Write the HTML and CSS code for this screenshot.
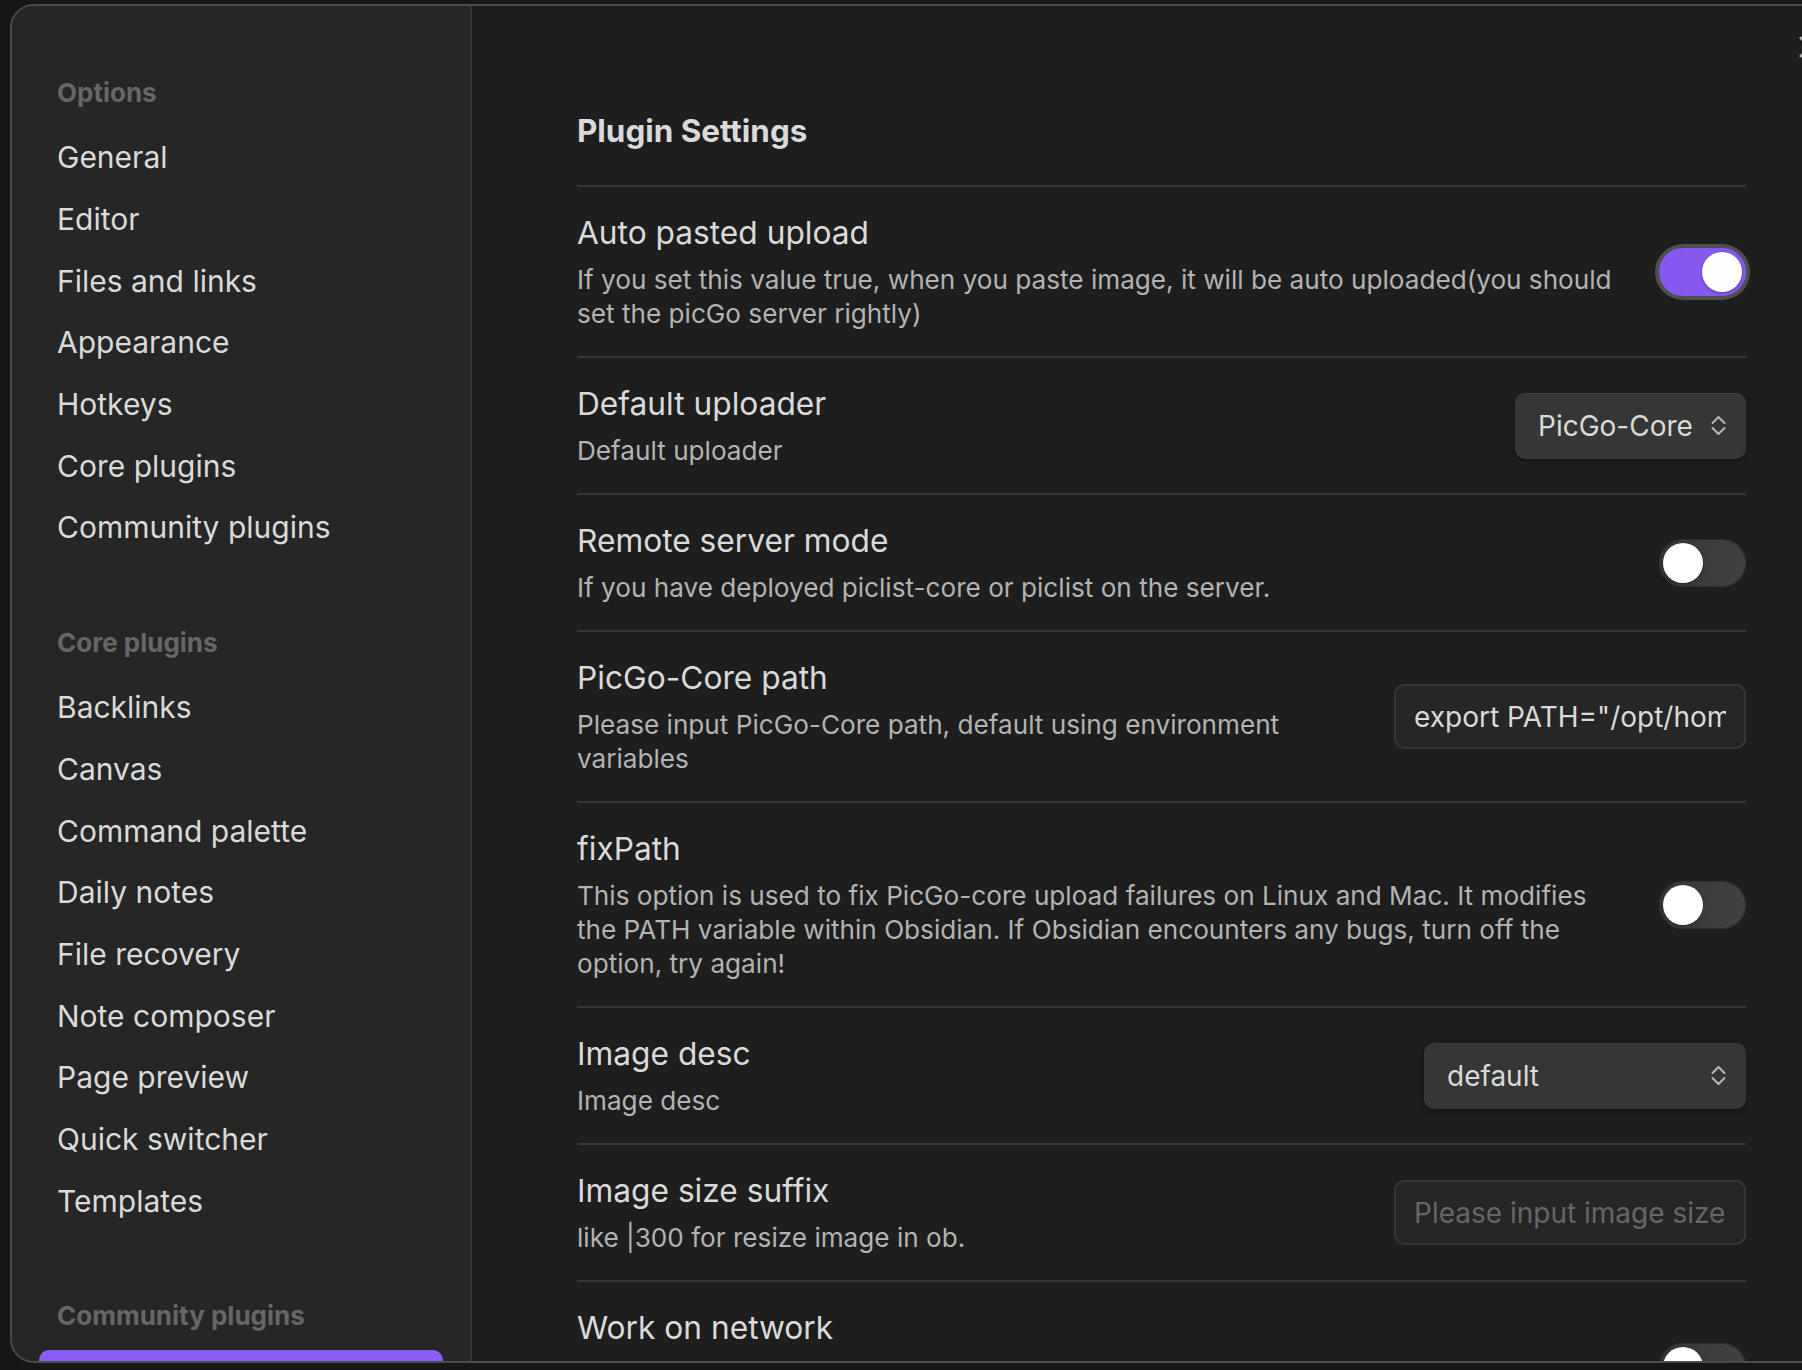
FILE: index.html
```html
<!DOCTYPE html>
<html lang="en">
<head>
<meta charset="utf-8">
<title>Plugin Settings</title>
<link rel="stylesheet" href="styles.css">
</head>
<body>
<div class="modal">
  <nav class="sidebar">
    <div class="group">
      <div class="group-title">Options</div>
      <div class="nav-item">General</div>
      <div class="nav-item">Editor</div>
      <div class="nav-item">Files and links</div>
      <div class="nav-item">Appearance</div>
      <div class="nav-item">Hotkeys</div>
      <div class="nav-item">Core plugins</div>
      <div class="nav-item">Community plugins</div>
    </div>
    <div class="group">
      <div class="group-title">Core plugins</div>
      <div class="nav-item">Backlinks</div>
      <div class="nav-item">Canvas</div>
      <div class="nav-item">Command palette</div>
      <div class="nav-item">Daily notes</div>
      <div class="nav-item">File recovery</div>
      <div class="nav-item">Note composer</div>
      <div class="nav-item">Page preview</div>
      <div class="nav-item">Quick switcher</div>
      <div class="nav-item">Templates</div>
    </div>
    <div class="group">
      <div class="group-title">Community plugins</div>
      <div class="nav-item active"></div>
    </div>
  </nav>
  <main class="content">
    <div class="settings">
      <h2 class="heading">Plugin Settings</h2>

      <div class="row">
        <div class="info">
          <div class="name">Auto pasted upload</div>
          <div class="desc">If you set this value true, when you paste image, it will be auto uploaded(you should set the picGo server rightly)</div>
        </div>
        <div class="control"><div class="toggle on"><span class="knob"></span></div></div>
      </div>

      <div class="row">
        <div class="info">
          <div class="name">Default uploader</div>
          <div class="desc">Default uploader</div>
        </div>
        <div class="control">
          <div class="select select-uploader"><span>PicGo-Core</span>
            <svg class="chev" viewBox="0 0 15 21" width="15" height="21"><polyline points="1.5,8 7.5,2 13.5,8"/><polyline points="1.5,13 7.5,19 13.5,13"/></svg>
          </div>
        </div>
      </div>

      <div class="row">
        <div class="info">
          <div class="name">Remote server mode</div>
          <div class="desc">If you have deployed piclist-core or piclist on the server.</div>
        </div>
        <div class="control"><div class="toggle"><span class="knob"></span></div></div>
      </div>

      <div class="row">
        <div class="info">
          <div class="name">PicGo-Core path</div>
          <div class="desc">Please input PicGo-Core path, default using environment variables</div>
        </div>
        <div class="control"><input class="text-input" type="text" value='export PATH="/opt/homebrew/bin:$PATH"'></div>
      </div>

      <div class="row">
        <div class="info">
          <div class="name">fixPath</div>
          <div class="desc">This option is used to fix PicGo-core upload failures on Linux and Mac. It modifies the PATH variable within Obsidian. If Obsidian encounters any bugs, turn off the option, try again!</div>
        </div>
        <div class="control"><div class="toggle"><span class="knob"></span></div></div>
      </div>

      <div class="row">
        <div class="info">
          <div class="name">Image desc</div>
          <div class="desc">Image desc</div>
        </div>
        <div class="control">
          <div class="select select-desc"><span>default</span>
            <svg class="chev" viewBox="0 0 15 21" width="15" height="21"><polyline points="1.5,8 7.5,2 13.5,8"/><polyline points="1.5,13 7.5,19 13.5,13"/></svg>
          </div>
        </div>
      </div>

      <div class="row">
        <div class="info">
          <div class="name">Image size suffix</div>
          <div class="desc">like |300 for resize image in ob.</div>
        </div>
        <div class="control"><input class="text-input" type="text" placeholder="Please input image size"></div>
      </div>

      <div class="row">
        <div class="info">
          <div class="name">Work on network</div>
          <div class="desc desc-hidden"></div>
        </div>
        <div class="control"><div class="toggle"><span class="knob"></span></div></div>
      </div>
    </div>
  </main>
  <div class="close"><svg viewBox="0 0 24 24" width="24" height="24"><line x1="3" y1="3" x2="21" y2="21"/><line x1="3" y1="21" x2="21" y2="3"/></svg></div>
</div>
</body>
</html>
```

FILE: styles.css
```css
* { box-sizing: border-box; }

html, body {
  margin: 0;
  padding: 0;
}

body {
  width: 1802px;
  height: 1370px;
  overflow: hidden;
  background: #171717;
  font-family: Inter, "Noto Sans", sans-serif;
  color: #dadada;
  position: relative;
}

.modal {
  position: absolute;
  left: 10px;
  top: 4px;
  width: 1850px;
  height: 1359px;
  border: 2px solid #4b4b4b;
  border-radius: 24px 0 0 24px;
  background: #1e1e1e;
  overflow: hidden;
  display: flex;
}

.sidebar {
  width: 460px;
  flex: none;
  background: #262626;
  border-right: 2px solid #353535;
  padding: 71px 27px 0;
}

.group {
  padding-bottom: 68.5px;
}

.group-title {
  font-size: 26px;
  line-height: 32px;
  font-weight: 700;
  color: #666666;
  padding: 0 18px 17.5px;
}

.nav-item {
  height: 61.7px;
  display: flex;
  align-items: center;
  padding: 0 18px;
  font-size: 30px;
  color: #dadada;
  border-radius: 10px;
}

.nav-item.active {
  background: #8b5cf6;
  color: #ffffff;
}

.content {
  flex: 1;
  padding: 105px 0 0 105px;
}

.settings {
  width: 1169px;
}

.heading {
  margin: 0;
  font-size: 31.4px;
  line-height: 40px;
  font-weight: 700;
  color: #dadada;
  padding-bottom: 34px;
}

.row {
  display: flex;
  align-items: center;
  border-top: 2px solid #363636;
  padding: 25px 0;
}

.info {
  flex: 1;
  min-width: 0;
}

.name {
  font-size: 31.7px;
  line-height: 42px;
  color: #dadada;
}

.desc {
  margin-top: 9px;
  font-size: 26.15px;
  line-height: 34px;
  color: #b3b3b3;
}

.desc-hidden {
  height: 68px;
}

.control {
  margin-left: 32px;
  flex: none;
  display: flex;
  justify-content: flex-end;
}

.toggle {
  width: 87px;
  height: 48px;
  border-radius: 24px;
  background: linear-gradient(90deg, #363636, #424242);
  padding: 4px;
  display: flex;
  box-shadow: inset 0 0 0 1px #2f2f2f;
}

.toggle .knob {
  width: 40px;
  height: 40px;
  border-radius: 50%;
  background: #ffffff;
  box-shadow: 0 1px 3px rgba(0,0,0,0.35);
}

.toggle.on {
  background: #8659ef;
  justify-content: flex-end;
  box-shadow: 0 0 0 4px #4f4f4f;
}

.select {
  height: 66px;
  border-radius: 10px;
  background: #363636;
  box-shadow: 0 2px 4px rgba(0,0,0,0.35), inset 0 1px 0 rgba(255,255,255,0.04);
  display: flex;
  align-items: center;
  justify-content: space-between;
  padding: 0 20px 0 23px;
  font-size: 28px;
  color: #dadada;
}

.select-uploader { width: 231px; }
.select-desc { width: 322px; }

.chev {
  fill: none;
  stroke: #b8b8b8;
  stroke-width: 2;
  stroke-linecap: round;
  stroke-linejoin: round;
}

.text-input {
  width: 352px;
  height: 65px;
  border-radius: 10px;
  border: 2px solid #363636;
  background: #262626;
  color: #dadada;
  font-family: Inter, "Noto Sans", sans-serif;
  font-size: 28px;
  padding: 0 18px;
  outline: none;
}

.text-input::placeholder {
  color: #666666;
}

.close {
  position: absolute;
  left: 1786px;
  top: 29px;
}

.close svg {
  fill: none;
  stroke: #b0b0b0;
  stroke-width: 3;
  stroke-linecap: round;
}
```
